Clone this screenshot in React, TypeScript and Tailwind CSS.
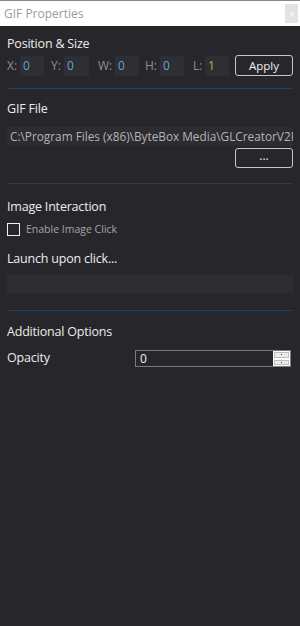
import React from 'react'

const font = { fontFamily: '"Open Sans", "Noto Sans", sans-serif' }

type CoordProps = { label: string; value: string; labelW: string; boxW: string; gap: string; valueColor?: string }

const Coord = ({ label, value, labelW, boxW, gap, valueColor = 'text-[#5fa3d9]' }: CoordProps) => (
    <div className={`flex items-center ${gap}`}>
        <span className={`${labelW} text-[12px] text-[#8e8e93]`}>{label}</span>
        <div className={`flex h-[20px] ${boxW} items-center bg-[#2e2e33] pl-[3px] text-[12px] ${valueColor}`}>
            {value}
        </div>
    </div>
)

const Divider = ({ color, className }: { color: string; className: string }) => (
    <div className={`h-px w-full ${color} ${className}`} />
)

const Heading = ({ children, className }: { children: React.ReactNode; className: string }) => (
    <div className={`h-[20px] text-[12.5px] leading-[20px] tracking-[-0.2px] text-[#ececec] ${className}`}>{children}</div>
)

export default function App() {
    return (
        <div className="flex h-[626px] w-[300px] flex-col bg-[#27272b]" style={font}>
            <div className="flex h-[26px] items-center justify-between border-t border-[#8a8a8a] bg-white pl-[4px] pr-[2px]">
                <span className="text-[12px] text-[#9a9a9a]">GIF Properties</span>
                <div className="flex h-[19px] w-[13px] items-center justify-center bg-[#e3e3e3] text-[9px] text-white">
                    x
                </div>
            </div>

            <div className="flex flex-col px-[7px]">
                <Heading className="mt-[8px]">Position &amp; Size</Heading>
                <div className="mt-[1px] flex h-[21px] items-center">
                    <Coord label="X:" value="0" labelW="w-[13px]" boxW="w-[24px]" gap="" />
                    <Coord label="Y:" value="0" labelW="w-[13px]" boxW="w-[25px]" gap="ml-[7px]" />
                    <Coord label="W:" value="0" labelW="w-[17px]" boxW="w-[24px]" gap="ml-[9px]" />
                    <Coord label="H:" value="0" labelW="w-[15px]" boxW="w-[24px]" gap="ml-[6px]" />
                    <Coord label="L:" value="1" labelW="w-[12px]" boxW="w-[24px]" gap="ml-[9px]" valueColor="text-[#d9a05f]" />
                    <button className="ml-auto flex h-[21px] w-[58px] items-center justify-center rounded-[3px] border border-[#c8c8c8] text-[11.5px] text-[#f0f0f0]">
                        Apply
                    </button>
                </div>
                <Divider color="bg-[#1b4468]" className="mt-[12px]" />

                <Heading className="mt-[10px]">GIF File</Heading>
                <div className="mt-[8px] flex h-[19px] items-center overflow-hidden whitespace-nowrap bg-[#2c2c31] pl-[3px] text-[11.8px] text-[#b4b4b8]">
                    C:\Program Files (x86)\ByteBox Media\GLCreatorV2Pro\gifs\sample.gif
                </div>
                <div className="mt-[2px] flex justify-end">
                    <button className="flex h-[20px] w-[58px] items-center justify-center rounded-[3px] border border-[#c8c8c8] pb-[4px] text-[12px] text-[#f0f0f0]">
                        ...
                    </button>
                </div>
                <Divider color="bg-[#35393f]" className="mt-[15px]" />

                <Heading className="mt-[13px]">Image Interaction</Heading>
                <div className="mt-[6px] flex h-[13px] items-center gap-[6px]">
                    <div className="h-[13px] w-[13px] border border-[#f2f2f2] bg-[#27272b]" />
                    <span className="text-[10.5px] leading-[13px] text-[#a4a4aa]">Enable Image Click</span>
                </div>
                <Heading className="mt-[13px]">Launch upon click...</Heading>
                <div className="mt-[6px] h-[18px] bg-[#2c2c31]" />
                <Divider color="bg-[#1b4468]" className="mt-[17px]" />

                <Heading className="mt-[11px]">Additional Options</Heading>
                <div className="mt-[8px] flex h-[17px] items-center">
                    <span className="w-[128px] text-[12.5px] tracking-[-0.2px] text-[#ececec]">Opacity</span>
                    <div className="flex h-[17px] w-[156px] items-stretch border border-[#7a7a7a] bg-[#27272b]">
                        <span className="flex flex-1 items-center pl-[4px] text-[12px] text-[#f5f5f5]">0</span>
                        <div className="flex w-[17px] flex-col bg-white">
                            <div className="m-[1px] flex flex-1 items-center justify-center border border-[#bdbdbd] bg-[#ececec]">
                                <div className="h-px w-px bg-[#333]" />
                            </div>
                            <div className="m-[1px] flex flex-1 items-center justify-center border border-[#bdbdbd] bg-[#ececec]">
                                <div className="h-px w-px bg-[#333]" />
                            </div>
                        </div>
                    </div>
                </div>
            </div>
        </div>
    )
}
